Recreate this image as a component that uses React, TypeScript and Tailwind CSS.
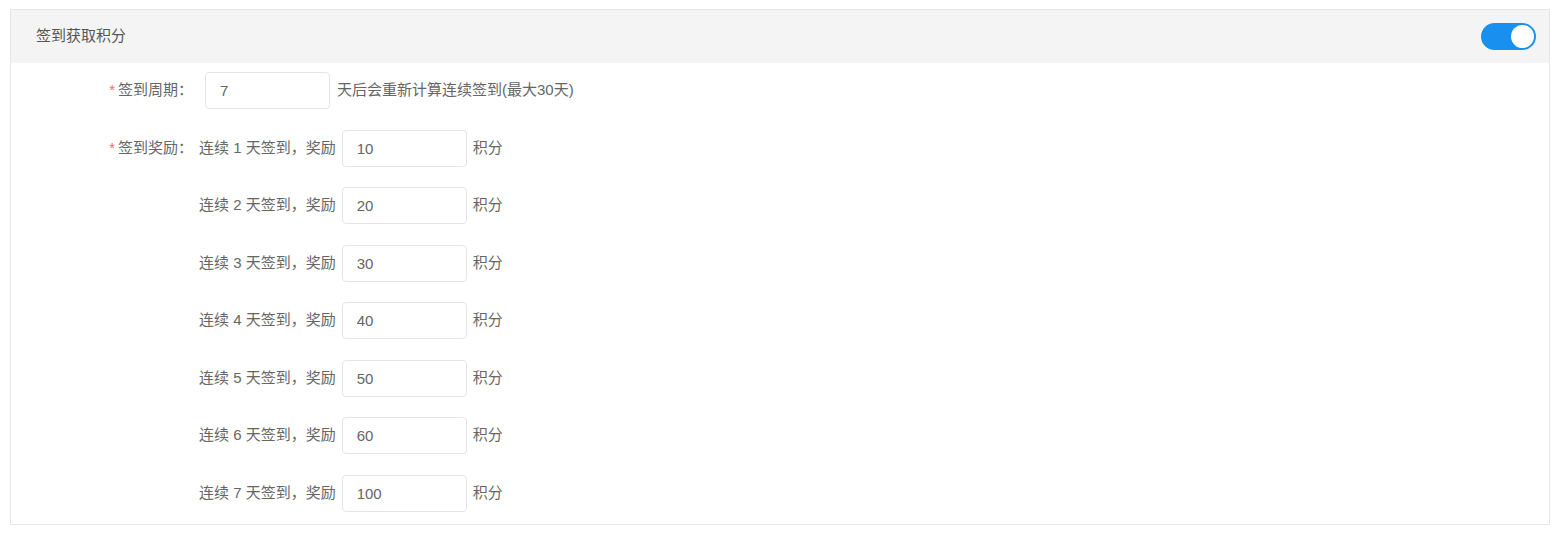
import React, { useState } from 'react';

const rewards = [10, 20, 30, 40, 50, 60, 100];

export default function App() {
  const [enabled, setEnabled] = useState(true);
  const [cycle, setCycle] = useState('7');
  const [values, setValues] = useState(rewards.map(String));

  return (
    <div
      className="min-h-[534px] bg-white pt-[9px] pl-[10px] pr-[14px] text-[15px] text-[#666]"
      style={{ fontFamily: '"Liberation Sans", "Noto Sans CJK SC", sans-serif' }}
    >
      <div className="border border-[#e6e6e6]">
        {/* Header */}
        <div className="flex h-[53px] items-center justify-between bg-[#f4f4f4] pl-[25px] pr-[13px]">
          <span className="text-[15px] text-[#555]">签到获取积分</span>
          <button
            onClick={() => setEnabled(!enabled)}
            className={`flex h-[27px] w-[55px] items-center rounded-full px-[2px] ${
              enabled ? 'justify-end bg-[#1890f0]' : 'justify-start bg-[#ccc]'
            }`}
          >
            <span className="h-[23px] w-[23px] rounded-full bg-white" />
          </button>
        </div>

        {/* Body */}
        <div className="flex flex-col gap-[20.5px] pt-[9px] pb-[12px]">
          <div className="flex h-[37px] items-center">
            <label className="w-[182px] text-right">
              <span className="mr-[3px] text-[#f56c6c]">*</span>签到周期：
            </label>
            <input
              value={cycle}
              onChange={(e) => setCycle(e.target.value)}
              className="ml-[12px] h-[37px] w-[125px] rounded-[4px] border border-[#e5e5e5] px-[14px] text-[#666] outline-none"
            />
            <span className="ml-[7px]">天后会重新计算连续签到(最大30天)</span>
          </div>

          {values.map((v, i) => (
            <div key={i} className="flex h-[37px] items-center">
              <label className="w-[182px] text-right">
                {i === 0 && (
                  <>
                    <span className="mr-[3px] text-[#f56c6c]">*</span>签到奖励：
                  </>
                )}
              </label>
              <span className="ml-[6px]">连续 {i + 1} 天签到，奖励</span>
              <input
                value={v}
                onChange={(e) => {
                  const next = [...values];
                  next[i] = e.target.value;
                  setValues(next);
                }}
                className="ml-[6px] h-[37px] w-[125px] rounded-[4px] border border-[#e5e5e5] px-[14px] text-[#666] outline-none"
              />
              <span className="ml-[6px]">积分</span>
            </div>
          ))}
        </div>
      </div>
    </div>
  );
}
